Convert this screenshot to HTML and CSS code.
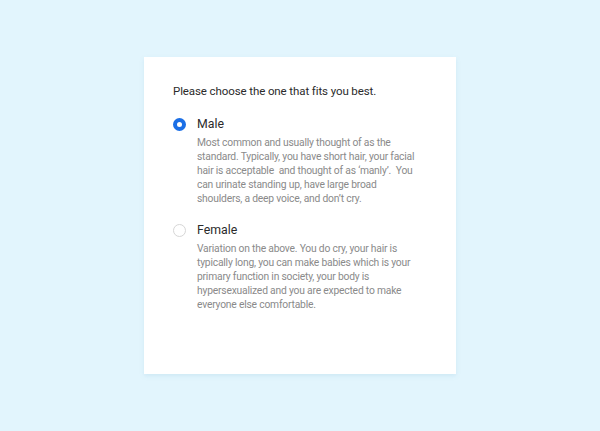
FILE: index.html
```html
<!DOCTYPE html>
<html lang="en">
<head>
<meta charset="utf-8">
<title>Gender</title>
<link rel="stylesheet" href="styles.css">
</head>
<body>
<main class="page">
  <section class="card">
    <p class="title">Please choose the one that fits you best.</p>
    <div class="option">
      <span class="radio radio-checked"></span>
      <div class="body">
        <div class="label">Male</div>
        <p class="desc">Most common and usually thought of as the standard. Typically, you have short hair, your facial hair is acceptable &nbsp;and thought of as ‘manly’. &nbsp;You can urinate standing up, have large broad shoulders, a deep voice, and don’t cry.</p>
      </div>
    </div>
    <div class="option">
      <span class="radio"></span>
      <div class="body">
        <div class="label">Female</div>
        <p class="desc">Variation on the above. You do cry, your hair is typically long, you can make babies which is your primary function in society, your body is hypersexualized and you are expected to make everyone else comfortable.</p>
      </div>
    </div>
  </section>
</main>
</body>
</html>
```
FILE: styles.css
```css
html, body {
  margin: 0;
  padding: 0;
}
body {
  background: #e2f5fd;
  font-family: Roboto, "Liberation Sans", sans-serif;
}
.page {
  width: 600px;
  height: 431px;
  display: flex;
  align-items: center;
  justify-content: center;
}
.card {
  box-sizing: border-box;
  width: 312px;
  height: 317px;
  background: #fff;
  padding: 25px 29px;
  box-shadow: 0 2px 4px rgba(150, 200, 225, 0.25);
}
.title {
  margin: 0 0 15px;
  font-size: 11.5px;
  letter-spacing: -0.1px;
  line-height: 18px;
  color: #2b2b2b;
}
.option {
  display: grid;
  grid-template-columns: 13px 1fr;
  column-gap: 11px;
  margin-bottom: 15px;
}
.radio {
  box-sizing: border-box;
  width: 13px;
  height: 13px;
  margin-top: 2.5px;
  border-radius: 50%;
  border: 1px solid #d6d6d6;
  background: #fff;
}
.radio-checked {
  border: 4.5px solid #1b6fe6;
}
.label {
  font-size: 12.3px;
  line-height: 18px;
  color: #2b2b2b;
}
.desc {
  margin: 3px 0 0;
  font-size: 10.3px;
  letter-spacing: -0.2px;
  line-height: 14px;
  color: #8a8a8a;
  width: 226px;
}
```
